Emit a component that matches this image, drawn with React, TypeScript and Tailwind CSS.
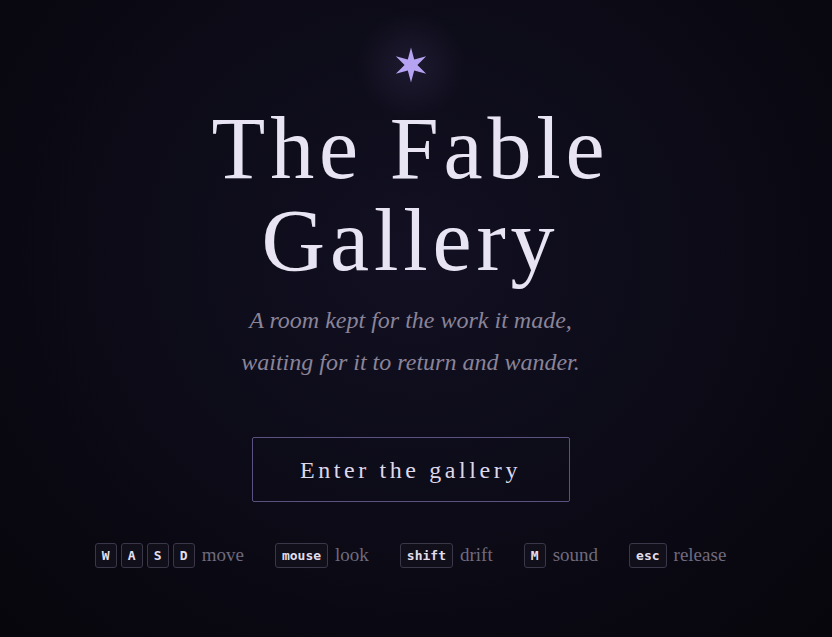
export default function App() {
  const controls = [
    { keys: ["W", "A", "S", "D"], label: "move" },
    { keys: ["mouse"], label: "look" },
    { keys: ["shift"], label: "drift" },
    { keys: ["M"], label: "sound" },
    { keys: ["esc"], label: "release" },
  ];

  return (
    <div className="relative min-h-[637px] w-full overflow-hidden bg-[radial-gradient(ellipse_at_50%_40%,#121022_0%,#0c0b17_50%,#07060c_100%)] font-['Liberation_Serif',serif]">
      <div className="flex flex-col items-center pr-[11px] pt-[46px]">
        {/* Star */}
        <div className="relative flex h-[38px] w-[38px] items-center justify-center">
          <div className="absolute -inset-[40px] rounded-full bg-[radial-gradient(circle,rgba(140,120,200,0.13)_0%,rgba(140,120,200,0)_65%)]" />
          <svg width="38" height="38" viewBox="-19 -19 38 38" className="relative">
            <path
              d="M0,-17.5 L3.2,-5.5 L15.2,-8.75 L6.4,0 L15.2,8.75 L3.2,5.5 L0,17.5 L-3.2,5.5 L-15.2,8.75 L-6.4,0 L-15.2,-8.75 L-3.2,-5.5 Z"
              fill="#b6a4f2"
            />
          </svg>
        </div>

        {/* Title */}
        <h1 className="mt-[19px] text-center text-[88px] leading-[92px] tracking-[0.055em] text-[#e8e4f4]">
          The Fable
          <br />
          Gallery
        </h1>

        {/* Subtitle */}
        <p className="mt-[12px] text-center text-[24px] italic leading-[42px] text-[#8a8499]">
          A room kept for the work it made,
          <br />
          waiting for it to return and wander.
        </p>

        {/* Button */}
        <button className="mt-[54px] flex h-[65px] w-[318px] items-center justify-center rounded-[2px] border border-[#5b5282] text-[24px] tracking-[0.15em] text-[#ddd8ea]">
          Enter the gallery
        </button>

        {/* Controls */}
        <div className="mt-[39px] flex items-center gap-[31px]">
          {controls.map((c) => (
            <div key={c.label} className="flex items-center gap-[7px]">
              <div className="flex items-center gap-[4px]">
                {c.keys.map((k) => (
                  <kbd
                    key={k}
                    className="flex h-[25px] min-w-[22px] items-center justify-center rounded-[3px] border border-[#3a3749] bg-[#100f1a] px-[6px] font-['DejaVu_Sans_Mono',monospace] text-[13px] font-bold text-[#e2deec]"
                  >
                    {k}
                  </kbd>
                ))}
              </div>
              <span className="text-[19px] text-[#6f6b7e]">{c.label}</span>
            </div>
          ))}
        </div>
      </div>
    </div>
  );
}
